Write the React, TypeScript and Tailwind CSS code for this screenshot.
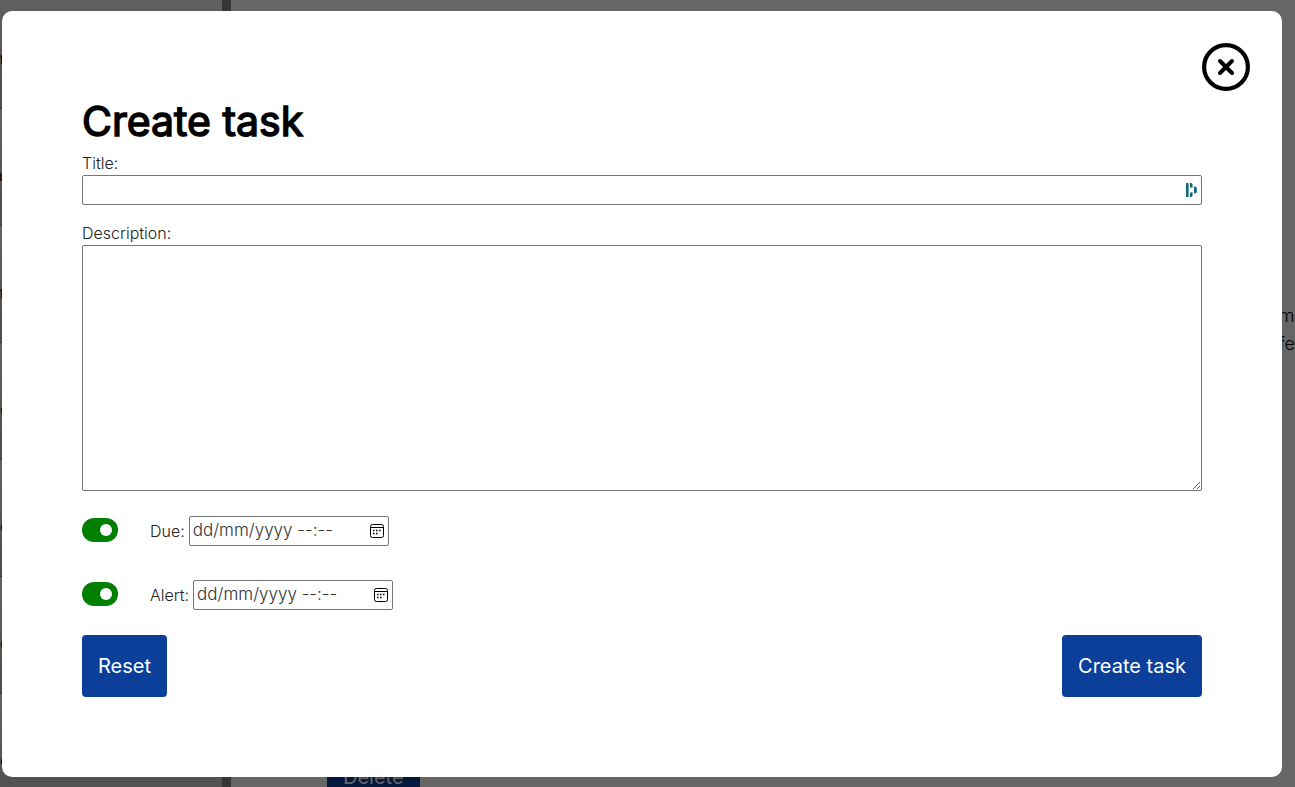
import React from "react";

const rows = ["n", "a", "n", "d", "d", "d", "d"];

function Backdrop() {
  return (
    <div aria-hidden="true" className="absolute inset-0 flex overflow-hidden bg-[#666666]">
      <div className="-mt-2 flex w-[222px] shrink-0 flex-col bg-[#626262] text-black">
        {rows.map((t, i) => (
          <div
            key={i}
            className="flex h-[117px] shrink-0 items-center border-b border-[#333333] bg-linear-to-b from-[#626262] to-[#4d4d4d] pt-4 text-base"
          >
            <span className={t === "d" ? "" : "-ml-1.5"}>{t}</span>
          </div>
        ))}
      </div>
      <div className="w-[9px] shrink-0 bg-[#363636]" />
      <div className="flex min-w-0 grow flex-col justify-between pl-24">
        <p className="self-end pt-[302px] text-lg leading-7 text-black">
          m
          <br />
          fe
        </p>
        <div className="-mb-[21px] self-start rounded bg-[#04193d] p-4 text-xl leading-[30px] font-normal text-[#666666]">
          Delete
        </div>
      </div>
    </div>
  );
}

function CloseIcon() {
  return (
    <svg viewBox="0 0 48 48" className="size-12" fill="none" stroke="black" strokeWidth="4" strokeLinecap="round">
      <circle cx="24" cy="24" r="21.900" strokeWidth="4.200" />
      <path d="M18 18 30 30M30 18 18 30" />
    </svg>
  );
}

function VaultIcon() {
  return (
    <svg viewBox="0 0 12 16" className="h-4 w-3" fill="#0e6a78">
      <rect x="1" y="1" width="2.600" height="14" rx="0.500" />
      <path d="M5 1h1.300L7.500 2v4L5 5.200zM5 10.800 7.500 10v4L6.300 15H5zM9 4.500h1.300L11.800 5.700v4.600L10.300 11.500H9z" />
    </svg>
  );
}

function CalendarIcon() {
  return (
    <svg viewBox="0 0 16 16" className="size-4" fill="none" stroke="black">
      <rect x="1.500" y="1.500" width="13" height="13" rx="2" />
      <path d="M1.500 4.500h13" />
      <path d="M4 7.500h1.500M7 7.500h1.500M10 7.500h1.500M4 10.500h1.500M7 10.500h1.500" strokeWidth="1.500" />
    </svg>
  );
}

function DateRow({ id, label }: { id: string; label: string }) {
  return (
    <div className="flex items-center">
      <input
        type="checkbox"
        role="switch"
        defaultChecked
        aria-label={`Enable ${id}`}
        className="mr-8 mb-0.5 flex h-6 w-9 appearance-none items-center rounded-full bg-gray-400 px-1.5 before:size-3 before:rounded-full before:bg-white checked:justify-end checked:bg-[#008000]"
      />
      <label htmlFor={id} className="mr-1">
        {label}
      </label>
      <div className="flex h-[30px] w-[200px] items-center rounded-xs border border-[#767676] pr-[3px]">
        <input
          id={id}
          type="text"
          placeholder="dd/mm/yyyy --:--"
          className="w-full min-w-0 grow pl-[3px] text-[17px] outline-none placeholder:text-[#333333]"
        />
        <button type="button" aria-label="Open calendar" className="shrink-0">
          <CalendarIcon />
        </button>
      </div>
    </div>
  );
}

const button = "rounded bg-[#0b3f99] p-4 text-xl leading-[30px] font-normal text-white";

export default function App() {
  return (
    <div className="relative min-h-screen overflow-hidden pt-[11px] pr-[13px] pb-2.5 pl-0.5 font-['Inter',sans-serif] text-base font-[350] text-black antialiased">
      <Backdrop />
      <div role="dialog" aria-labelledby="heading" className="relative rounded-[10px] bg-white p-20">
        <button type="button" aria-label="Close" className="absolute top-8 right-8">
          <CloseIcon />
        </button>
        <form className="flex flex-col">
          <h1
            id="heading"
            className="text-[41px] leading-[60px] font-normal [-webkit-text-stroke:1.5px_black]"
          >
            Create task
          </h1>
          <label htmlFor="title" className="text-[#222222]">Title:</label>
          <div className="mb-4 flex h-[30px] items-center rounded-xs border border-[#767676] pr-1">
            <input id="title" type="text" className="min-w-0 grow px-1 outline-none" />
            <VaultIcon />
          </div>
          <label htmlFor="description" className="text-[#222222]">Description:</label>
          <textarea id="description" className="mb-[25px] h-[246px] resize rounded-xs border border-[#767676] p-1 outline-none" />
          <div className="flex flex-col gap-[34px] text-[#222222]">
            <DateRow id="due" label="Due:" />
            <DateRow id="alert" label="Alert:" />
          </div>
          <div className="mt-[25px] flex justify-between">
            <button type="reset" className={button}>
              Reset
            </button>
            <button type="button" className={button}>
              Create task
            </button>
          </div>
        </form>
      </div>
    </div>
  );
}
